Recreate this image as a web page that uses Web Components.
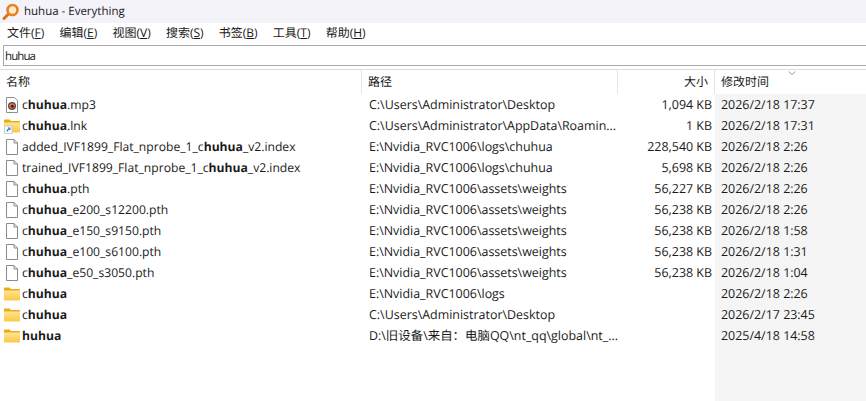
<!DOCTYPE html>
<html>
<head>
<meta charset="utf-8">
<title>huhua - Everything</title>
<style>
  html, body { margin: 0; height: 100%; background: #fff; overflow: hidden; }
  body { font: 12px "Open Sans", "Noto Sans CJK SC", sans-serif; color: #1a1a1a; text-rendering: geometricPrecision; }
  ev-window { height: 401px; }
</style>
</head>
<body>
<ev-window>
  <ev-titlebar>huhua - Everything</ev-titlebar>
  <ev-menubar></ev-menubar>
  <ev-searchbox value="huhua"></ev-searchbox>
  <ev-results></ev-results>
</ev-window>

<script>
class EvWindow extends HTMLElement {
  constructor() {
    super();
    this.attachShadow({ mode: 'open' });
    this.shadowRoot.innerHTML = `
      <style>
        :host { display: flex; flex-direction: column; background: #fff; overflow: hidden; }
      </style>
      <slot></slot>`;
  }
}

class EvTitlebar extends HTMLElement {
  constructor() {
    super();
    this.attachShadow({ mode: 'open' });
    this.shadowRoot.innerHTML = `
      <style>
        :host { display: flex; align-items: center; height: 23px; flex: none; background: #f3f3f9; padding-left: 2px; gap: 5px; color: #1a1a1a; font-size: 11.5px; }
        svg { width: 17px; height: 18px; flex: none; }
      </style>
      <svg viewBox="0 0 17 18">
        <path d="M6.5 11 L2 15.5" stroke="#d9731c" stroke-width="3" stroke-linecap="round" fill="none"/>
        <circle cx="10.5" cy="7" r="5" fill="#fdeacb" stroke="#e8821e" stroke-width="2.6"/>
      </svg>
      <span><slot></slot></span>`;
  }
}

class EvMenubar extends HTMLElement {
  constructor() {
    super();
    this.attachShadow({ mode: 'open' });
    const items = [['文件','F'],['编辑','E'],['视图','V'],['搜索','S'],['书签','B'],['工具','T'],['帮助','H']];
    this.shadowRoot.innerHTML = `
      <style>
        :host { display: flex; height: 19px; flex: none; align-items: center; padding-left: 7px; gap: 15.2px; background: #fff; font-size: 12px; }
        u { text-underline-offset: 1px; }
      </style>
      ${items.map(([t, k]) => `<span>${t}(<u>${k}</u>)</span>`).join('')}`;
  }
}

class EvSearchbox extends HTMLElement {
  constructor() {
    super();
    this.attachShadow({ mode: 'open' });
    this.shadowRoot.innerHTML = `
      <style>
        :host { display: block; flex: none; padding: 3px 0 3px 3px; }
        div { height: 19px; line-height: 21px; border: 1px solid #a9a9a9; border-right: 0; padding-left: 1px; font-size: 11.5px; letter-spacing: -.9px; }
      </style>
      <div>${this.getAttribute('value')}</div>`;
  }
}

const FOLDER = `<path d="M0 2.500q0-1 1-1h4.500l1.500 1.500h8q1 0 1 1v1H0z" fill="#eeaa10"/><path d="M0 4.500h16v9q0 1-1 1H1q-1 0-1-1z" fill="url(#fg)"/>`;
const FOLDER_DEFS = `<defs><linearGradient id="fg" x1="0" y1="0" x2="0" y2="1"><stop offset="0" stop-color="#fde597"/><stop offset="1" stop-color="#fbc842"/></linearGradient></defs>`;

const ICONS = {
  audio: `<svg viewBox="0 0 16 16"><path d="M2.500 .5h8l3 3v12h-11z" fill="#fff" stroke="#8f8f8f"/><circle cx="8" cy="9" r="4" fill="#56494f"/><circle cx="8" cy="9" r="2.800" fill="#e2773a"/><circle cx="8.400" cy="9.200" r="1.500" fill="#2e2630"/></svg>`,
  file: `<svg viewBox="0 0 16 16"><path d="M2.500 .5h7.500l3.500 3.500v11.500h-11z" fill="#fff" stroke="#8a8a8a"/><path d="M10 .5v3.500h3.500" fill="none" stroke="#8a8a8a"/></svg>`,
  folder: `<svg viewBox="0 0 16 16">${FOLDER_DEFS}${FOLDER}</svg>`,
  link: `<svg viewBox="0 0 16 16">${FOLDER_DEFS}${FOLDER}<rect x=".5" y="8" width="7.500" height="7.500" fill="#fff" stroke="#c4c4c4" stroke-width=".8"/><path d="M2.500 13.500q0-2.500 2-3l-1-1h3v3l-1-1q-1.500 .5-1.500 2z" fill="#1d86e0"/></svg>`
};

class EvRow extends HTMLElement {
  connectedCallback() {
    if (this.shadowRoot) return;
    this.attachShadow({ mode: 'open' });
    const a = n => this.getAttribute(n) || '';
    // segments in **double stars** are the bold search hits
    const name = a('name').replace(/\*\*(.+?)\*\*/g, '<b>$1</b>');
    this.shadowRoot.innerHTML = `
      <style>
        :host { display: grid; grid-template-columns: 362px 256px 97px 151px; height: 21px; line-height: 21px; font-size: 12.45px; white-space: nowrap; }
        .name { display: flex; align-items: center; padding-left: 4px; gap: 2px; overflow: hidden; font-size: 12.15px; }
        svg { width: 16px; height: 16px; flex: none; }
        b { font-weight: 700; }
        .path { padding-left: 7px; overflow: hidden; }
        .size { text-align: right; padding-right: 3px; }
        .date { padding-left: 6px; }
      </style>
      <div class="name">${ICONS[a('icon')]}<span>${name}</span></div>
      <div class="path">${a('path')}</div>
      <div class="size">${a('size')}</div>
      <div class="date">${a('date')}</div>`;
  }
}

class EvResults extends HTMLElement {
  constructor() {
    super();
    this.attachShadow({ mode: 'open' });
    const rows = [
      ['audio','c**huhua**.mp3','C:\\Users\\Administrator\\Desktop','1,094 KB','2026/2/18 17:37'],
      ['link','c**huhua**.lnk','C:\\Users\\Administrator\\AppData\\Roamin...','1 KB','2026/2/18 17:31'],
      ['file','added_IVF1899_Flat_nprobe_1_c**huhua**_v2.index','E:\\Nvidia_RVC1006\\logs\\chuhua','228,540 KB','2026/2/18 2:26'],
      ['file','trained_IVF1899_Flat_nprobe_1_c**huhua**_v2.index','E:\\Nvidia_RVC1006\\logs\\chuhua','5,698 KB','2026/2/18 2:26'],
      ['file','c**huhua**.pth','E:\\Nvidia_RVC1006\\assets\\weights','56,227 KB','2026/2/18 2:26'],
      ['file','c**huhua**_e200_s12200.pth','E:\\Nvidia_RVC1006\\assets\\weights','56,238 KB','2026/2/18 2:26'],
      ['file','c**huhua**_e150_s9150.pth','E:\\Nvidia_RVC1006\\assets\\weights','56,238 KB','2026/2/18 1:58'],
      ['file','c**huhua**_e100_s6100.pth','E:\\Nvidia_RVC1006\\assets\\weights','56,238 KB','2026/2/18 1:31'],
      ['file','c**huhua**_e50_s3050.pth','E:\\Nvidia_RVC1006\\assets\\weights','56,238 KB','2026/2/18 1:04'],
      ['folder','c**huhua**','E:\\Nvidia_RVC1006\\logs','','2026/2/18 2:26'],
      ['folder','c**huhua**','C:\\Users\\Administrator\\Desktop','','2026/2/17 23:45'],
      ['folder','**huhua**','D:\\旧设备\\来自：电脑QQ\\nt_qq\\global\\nt_...','','2025/4/18 14:58']
    ];
    this.shadowRoot.innerHTML = `
      <style>
        :host { display: block; flex: 1; position: relative; border-top: 1px solid #dcdcdc; }
        .head { display: grid; grid-template-columns: 362px 256px 97px 151px; height: 24px; line-height: 24px; font-size: 12px; }
        .head div { border-right: 1px solid #e5e5e5; padding-left: 6px; position: relative; }
        .head div:last-child { border: 0; }
        .head .r { text-align: right; padding-right: 6px; }
        .sort { position: absolute; left: 73px; top: 1px; width: 8px; height: 4px; }
        .body { background: linear-gradient(to right, #fff 715px, #f5f5f5 715px); height: 307px; }
      </style>
      <div class="head">
        <div>名称</div><div>路径</div><div class="r">大小</div>
        <div>修改时间<svg class="sort" viewBox="0 0 8 4"><path d="M.5 .5L4 3.500 7.500 .5" fill="none" stroke="#999"/></svg></div>
      </div>
      <div class="body">
        ${rows.map(r => `<ev-row icon="${r[0]}" name="${r[1]}" path="${r[2]}" size="${r[3]}" date="${r[4]}"></ev-row>`).join('')}
      </div>`;
  }
}

customElements.define('ev-window', EvWindow);
customElements.define('ev-titlebar', EvTitlebar);
customElements.define('ev-menubar', EvMenubar);
customElements.define('ev-searchbox', EvSearchbox);
customElements.define('ev-row', EvRow);
customElements.define('ev-results', EvResults);
</script>
</body>
</html>
